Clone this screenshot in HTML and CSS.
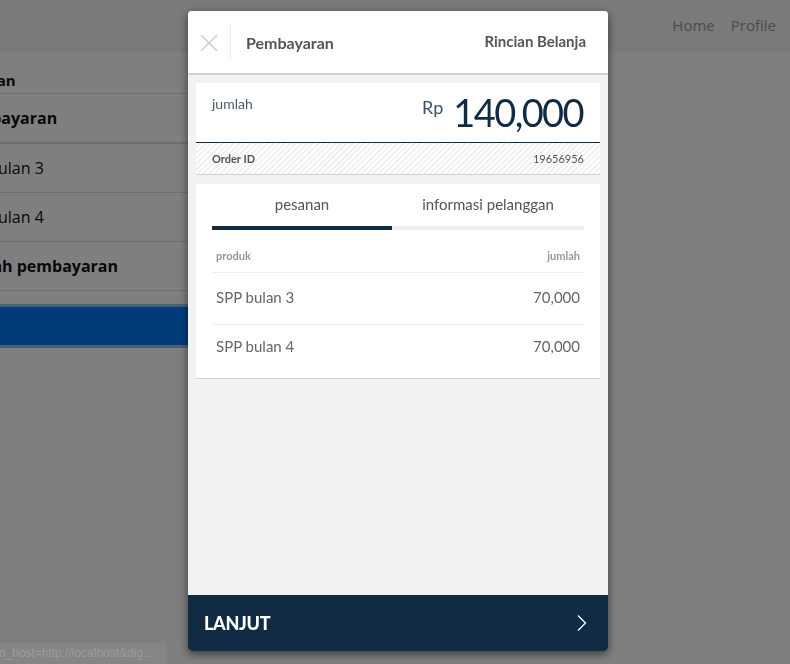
FILE: index.html
```html
<!DOCTYPE html>
<html lang="id">
<head>
<meta charset="utf-8">
<title>Pembayaran</title>
<link rel="stylesheet" href="styles.css">
</head>
<body>
<div class="page">
  <nav class="navbar">
    <a class="nav-link">Home</a>
    <a class="nav-link">Profile</a>
  </nav>
  <div class="content">
    <div class="bg-row bg-head">Tagihan</div>
    <div class="bg-row bg-bold bg-thick">Pembayaran</div>
    <div class="bg-row">SPP bulan 3</div>
    <div class="bg-row">SPP bulan 4</div>
    <div class="bg-row bg-bold">Jumlah pembayaran</div>
    <div class="bg-button"></div>
  </div>
</div>
<div class="overlay"></div>
<div class="status">in_host=http://localhost&amp;dig...</div>

<div class="modal">
  <header class="m-header">
    <span class="m-close">
      <svg width="18" height="18" viewBox="0 0 18 18"><path d="M1 1 L17 17 M17 1 L1 17" stroke="#c8c8c8" stroke-width="1.2" fill="none"/></svg>
    </span>
    <span class="m-divider"></span>
    <span class="m-title">Pembayaran</span>
    <span class="m-detail">Rincian Belanja</span>
  </header>
  <main class="m-body">
    <section class="card amount-card">
      <div class="amount-top">
        <span class="amount-label">jumlah</span>
        <span class="amount-value"><span class="rp">Rp</span><span class="num">140,000</span></span>
      </div>
      <div class="order-row">
        <span class="order-label">Order ID</span>
        <span class="order-id">19656956</span>
      </div>
    </section>
    <section class="card detail-card">
      <div class="tabs">
        <div class="tab active">pesanan</div>
        <div class="tab">informasi pelanggan</div>
      </div>
      <div class="t-head">
        <span>produk</span>
        <span>jumlah</span>
      </div>
      <div class="t-row">
        <span>SPP bulan 3</span>
        <span>70,000</span>
      </div>
      <div class="t-row last">
        <span>SPP bulan 4</span>
        <span>70,000</span>
      </div>
    </section>
  </main>
  <footer class="m-footer">
    <span class="next-label">LANJUT</span>
    <svg width="12" height="18" viewBox="0 0 12 18"><path d="M2 1.5 L9.5 9 L2 16.5" stroke="#ffffff" stroke-width="1.3" fill="none"/></svg>
  </footer>
</div>
</body>
</html>
```
FILE: styles.css
```css
* { box-sizing: border-box; }
html, body { margin: 0; padding: 0; }
body {
  width: 790px;
  height: 664px;
  overflow: hidden;
  font-family: "Open Sans", "Noto Sans", sans-serif;
  background: #ffffff;
  color: #222;
}
.page { width: 790px; }
.navbar {
  height: 52px;
  background: #f4f4f4;
  display: flex;
  justify-content: flex-end;
  align-items: center;
  gap: 16px;
  padding-right: 14px;
}
.nav-link {
  font-size: 15px;
  color: #999;
  padding-bottom: 2px;
}
.content {
  margin-left: -44px;
  padding-top: 18px;
  width: 560px;
}
.bg-row {
  border-bottom: 1px solid #dcdcdc;
  height: 49px;
  display: flex;
  align-items: center;
  font-size: 16px;
  color: #111;
}
.bg-head {
  height: 24px;
  font-weight: 700;
  font-size: 15px;
  align-items: flex-start;
}
.bg-bold { font-weight: 700; }
.bg-thick { border-bottom-width: 2px; height: 50px; }
.bg-button {
  margin-top: 13px;
  height: 44px;
  background: #0078f4;
  border: 3px solid #94c0ef;
}
.overlay {
  position: fixed;
  inset: 0;
  background: rgba(0, 0, 0, 0.5);
}
.status {
  position: fixed;
  left: 0;
  bottom: 0;
  width: 167px;
  height: 21px;
  background: #858585;
  color: #9c9c9c;
  font-family: "Liberation Sans", Arial, sans-serif;
  font-size: 12px;
  line-height: 21px;
  padding-left: 2px;
  white-space: nowrap;
  overflow: hidden;
  border-top-right-radius: 3px;
  text-indent: -6px;
}
.modal {
  position: fixed;
  left: 188px;
  top: 11px;
  width: 420px;
  height: 640px;
  background: #f2f2f2;
  border-radius: 4px;
  overflow: hidden;
  display: flex;
  flex-direction: column;
  box-shadow: 0 3px 10px rgba(0, 0, 0, 0.55);
  font-family: "Lato", "Noto Sans", sans-serif;
}
.m-header {
  height: 64px;
  flex: none;
  background: #fff;
  border-bottom: 2px solid #cfcfcf;
  display: flex;
  align-items: center;
  padding: 0 22px 0 12px;
}
.m-close { display: flex; width: 18px; height: 18px; margin-top: 1px; }
.m-divider {
  width: 1px;
  height: 37px;
  background: #ececec;
  margin: 0 15px 0 12px;
}
.m-title {
  font-size: 16px;
  font-weight: 700;
  color: #555;
  margin-top: 1px;
}
.m-detail {
  margin-left: auto;
  font-size: 15px;
  font-weight: 700;
  color: #555;
  margin-top: -2px;
}
.m-body {
  flex: 1;
  padding: 8px;
  display: flex;
  flex-direction: column;
  gap: 9px;
}
.card { background: #fff; }
.amount-card { border-bottom: 1px solid #d0d0d0; }
.amount-top {
  height: 60px;
  border-bottom: 1px solid #102b43;
  display: flex;
  justify-content: space-between;
  padding: 12px 16px 0 16px;
}
.amount-label { font-size: 14px; color: #4a5a6a; }
.amount-value { display: flex; align-items: flex-start; color: #102b43; }
.rp { font-size: 18px; color: #3e5366; margin-top: 1px; margin-right: 10px; }
.num { font-size: 38px; line-height: 38px; margin-top: -2px; letter-spacing: -1.6px; margin-right: 1px; }
.order-row {
  height: 31px;
  display: flex;
  justify-content: space-between;
  align-items: center;
  padding: 0 16px;
  background: repeating-linear-gradient(135deg, #ffffff 0 2px, #f1f1f1 2px 4px);
}
.order-label { font-size: 11px; font-weight: 700; color: #555; }
.order-id { font-size: 11px; color: #555; }
.detail-card {
  padding: 0 16px;
  border-bottom: 1px solid #d0d0d0;
  height: 195px;
}
.tabs { display: flex; }
.tab {
  flex: 1;
  text-align: center;
  font-size: 15px;
  color: #555;
  height: 46px;
  padding-top: 11px;
  border-bottom: 4px solid #efefef;
}
.tab.active { flex: none; width: 180px; border-bottom-color: #102b43; }
.t-head {
  display: flex;
  justify-content: space-between;
  padding: 0 4px;
  height: 43px;
  align-items: flex-end;
  padding-bottom: 10px;
  font-size: 11px;
  font-weight: 700;
  color: #999;
  border-bottom: 1px solid #eeeeee;
}
.t-row {
  display: flex;
  justify-content: space-between;
  align-items: center;
  height: 52px;
  padding: 0 4px 4px;
  font-size: 15px;
  color: #666;
  border-bottom: 1px solid #eeeeee;
}
.t-row.last { border-bottom: none; height: 48px; padding-bottom: 6px; }
.m-footer {
  height: 56px;
  flex: none;
  background: #102b43;
  display: flex;
  align-items: center;
  justify-content: space-between;
  padding: 0 20px 0 16px;
}
.next-label {
  color: #fff;
  font-weight: 900;
  font-size: 18px;
  letter-spacing: -0.3px;
  margin-top: 0px;
}
```
